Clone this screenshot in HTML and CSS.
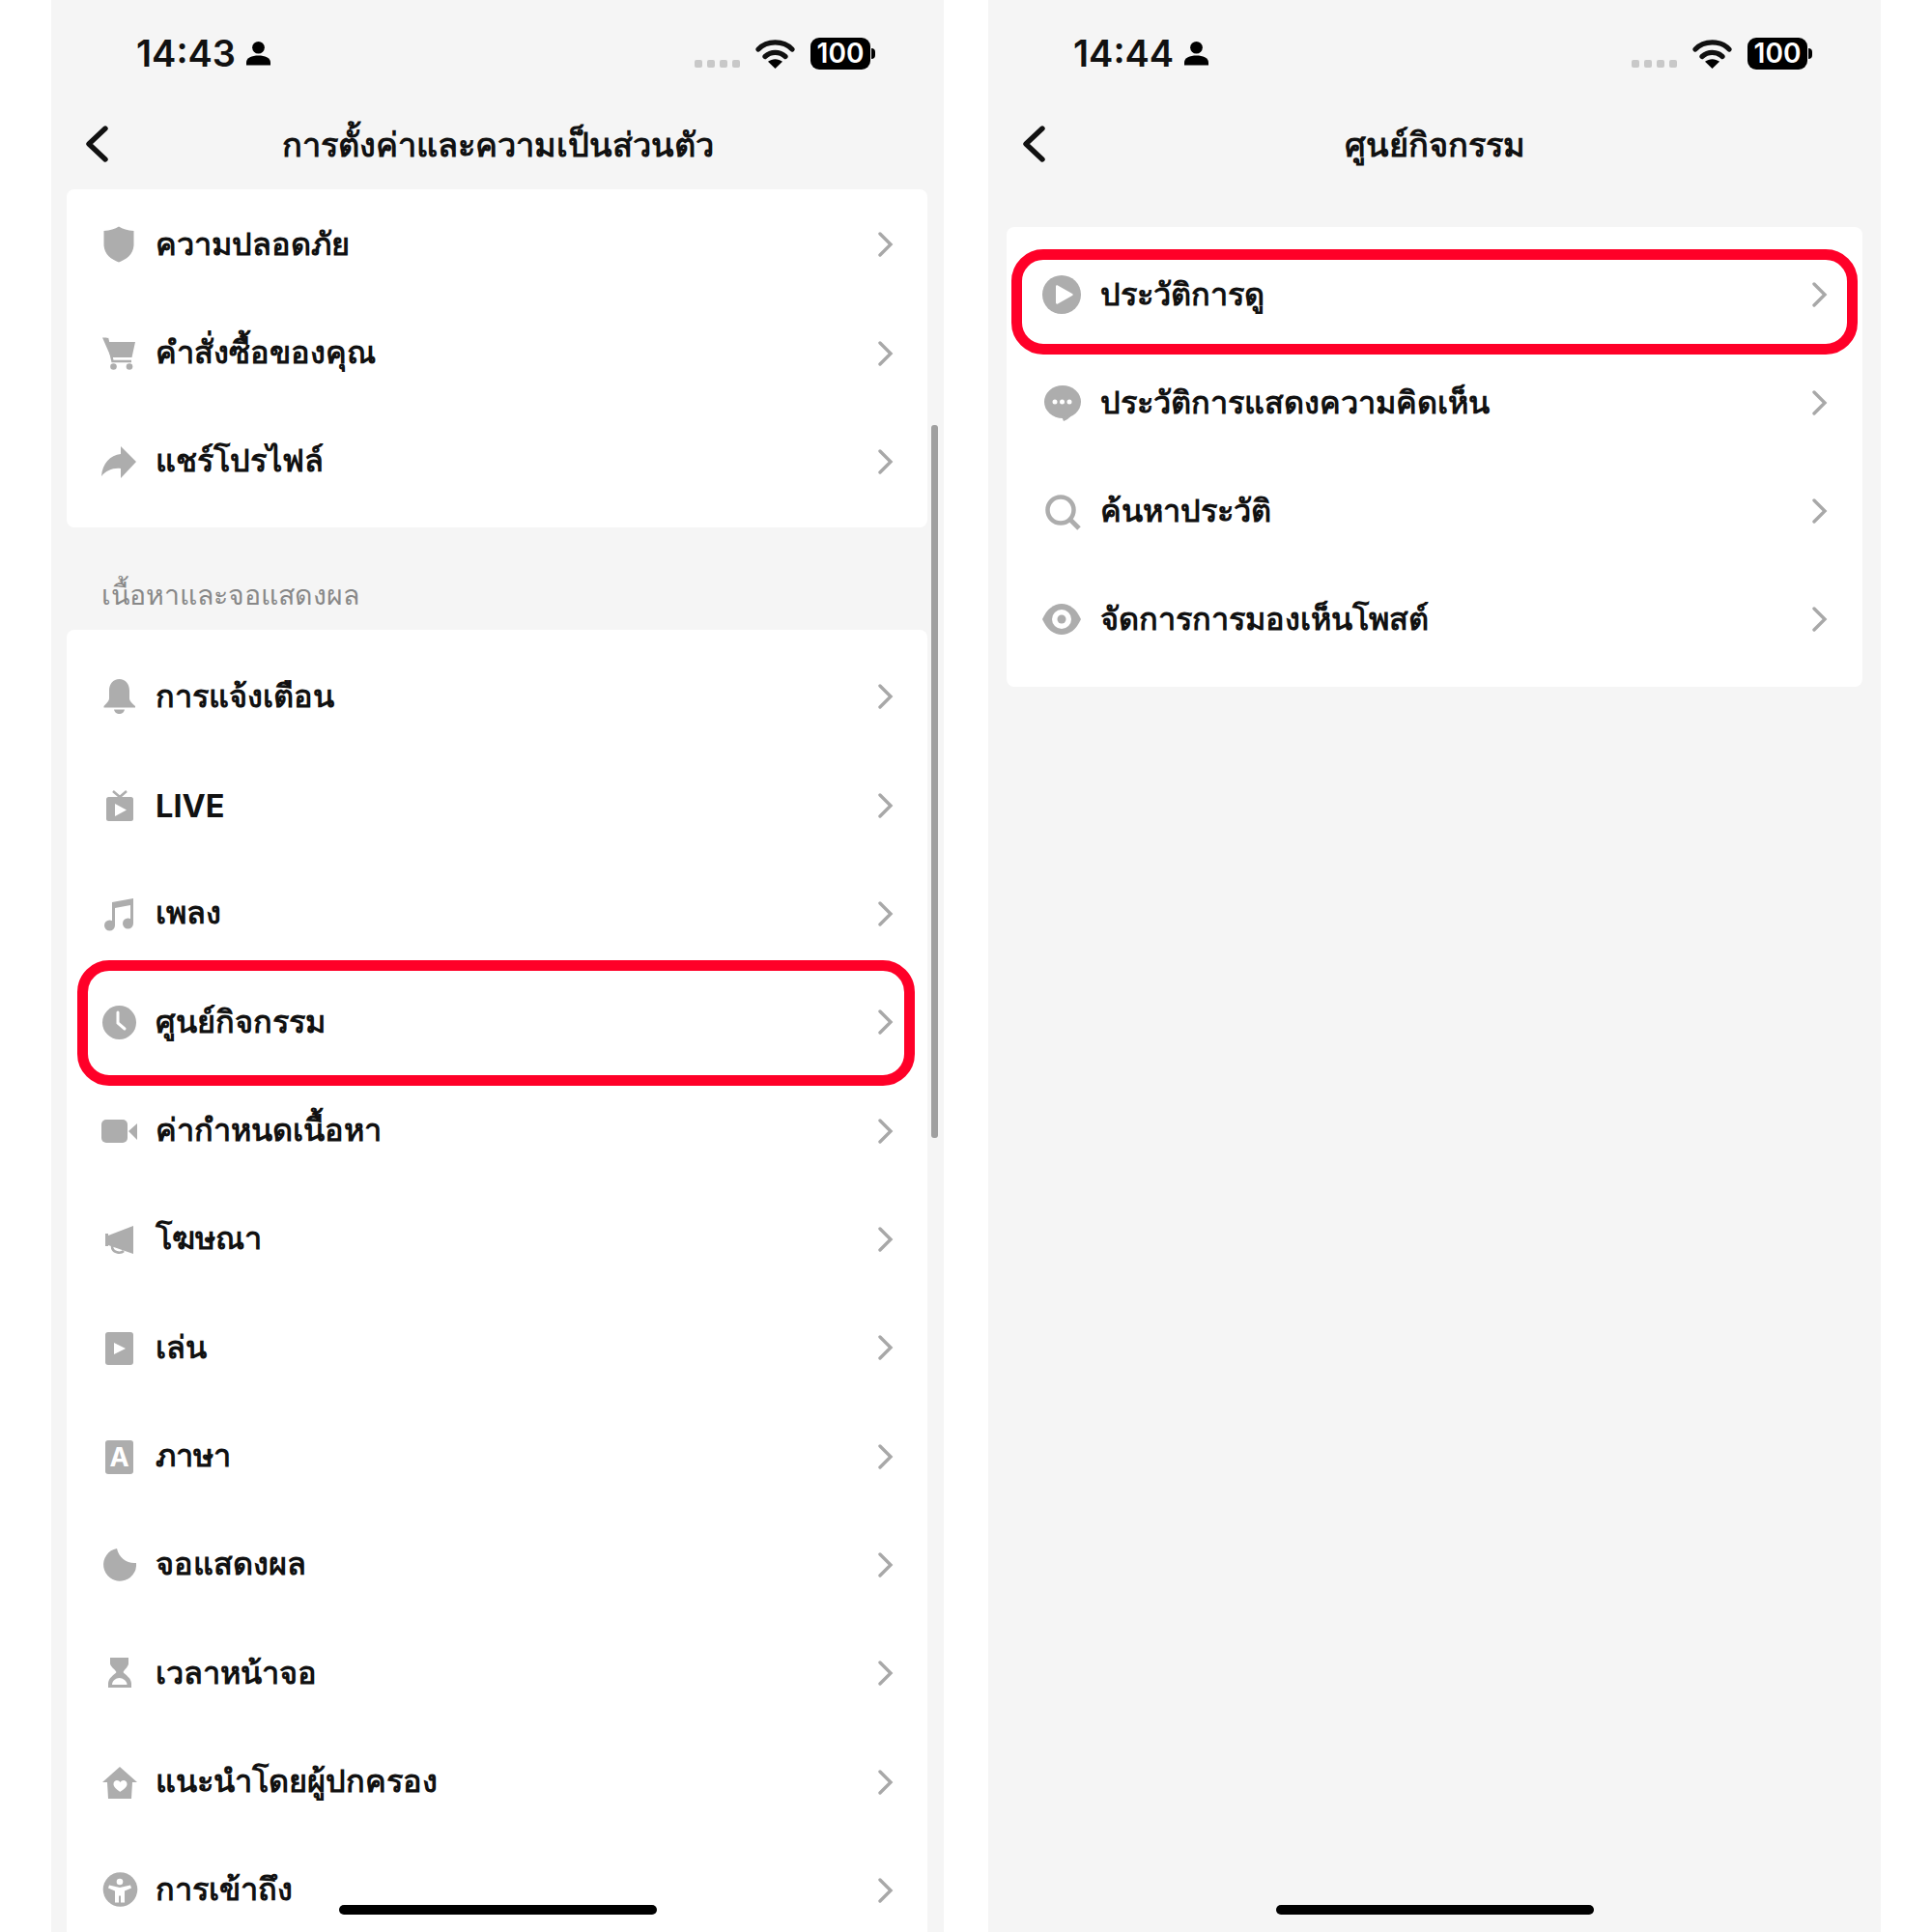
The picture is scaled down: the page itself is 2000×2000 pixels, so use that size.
FILE: index.html
```html
<!DOCTYPE html>
<html lang="th">
<head>
    <meta charset="UTF-8">
    <meta name="viewport" content="width=device-width, initial-scale=1.0">
    <title>ศูนย์กิจกรรม</title>
    <link rel="stylesheet" href="styles.css">
</head>
<body>
    <svg class="sprite" aria-hidden="true">
        <symbol id="chevron" viewBox="0 0 16 26"><path d="M2 2l11 11L2 24" fill="none" stroke="currentColor" stroke-width="3.4" stroke-linecap="round"/></symbol>
        <symbol id="back" viewBox="0 0 24 38"><path d="M21 3L4 19l17 16" fill="none" stroke="currentColor" stroke-width="5.4" stroke-linecap="round" stroke-linejoin="round"/></symbol>
        <symbol id="person" viewBox="0 0 26 26"><circle cx="13" cy="7" r="6.6"/><path d="M0 26v-3c0-5 6-7.5 13-7.5S26 18 26 23v3z"/></symbol>
        <symbol id="wifi" viewBox="0 0 41 31"><path d="M3 11C12 1.500 29 1.500 38 11M10 18.500c6-5.500 15-5.500 21 0" fill="none" stroke="currentColor" stroke-width="5.2" stroke-linecap="round"/><path d="M20.500 31L13 23.800c4.500-3.500 10.500-3.500 15 0z"/></symbol>
    </svg>

    <div class="screens">
        <div class="phone">
            <div class="statusbar">
                <span class="clock">14:43</span>
                <svg class="person"><use href="#person"/></svg>
                <div class="status-right">
                    <div class="signal"><i></i><i></i><i></i><i></i></div>
                    <svg class="wifi"><use href="#wifi"/></svg>
                    <div class="battery">100</div>
                </div>
            </div>
            <div class="navbar">
                <svg class="back"><use href="#back"/></svg>
                <h2>การตั้งค่าและความเป็นส่วนตัว</h2>
            </div>

            <div class="card first-card">
                <div class="row">
                    <svg class="icon" viewBox="0 0 40 40"><path d="M20 1.500C24 4 29 5.500 35.500 6v14c0 10-7.500 15.500-15.500 18.500C12 35.500 4.500 30 4.500 20V6C11 5.500 16 4 20 1.500z"/></svg>
                    <span class="label">ความปลอดภัย</span>
                    <svg class="chevron"><use href="#chevron"/></svg>
                </div>
                <div class="row">
                    <svg class="icon" viewBox="0 0 40 40"><path d="M3 3.500h4.500l2.500 4.500h27l-3.500 16H12z"/><path d="M8 4l5.500 24H33" fill="none" stroke="#adadad" stroke-width="2.5"/><circle cx="14.500" cy="33.500" r="3.3"/><circle cx="31" cy="33.500" r="3.3"/></svg>
                    <span class="label">คำสั่งซื้อของคุณ</span>
                    <svg class="chevron"><use href="#chevron"/></svg>
                </div>
                <div class="row">
                    <svg class="icon" viewBox="0 0 40 40"><path d="M22 4l16 16-16 17V27C14 26 7 29 2 35 3 22 11 13 22 12z"/></svg>
                    <span class="label">แชร์โปรไฟล์</span>
                    <svg class="chevron"><use href="#chevron"/></svg>
                </div>
            </div>

            <div class="section-title">เนื้อหาและจอแสดงผล</div>

            <div class="card">
                <div class="row">
                    <svg class="icon" viewBox="0 0 40 40"><path d="M20.500 2C27 2 31 7 31 14v8c0 3 3 5 6 8v1.500H4.500V30c2.500-3 5.500-5 5.500-8v-8C10 7 14 2 20.500 2z"/><path d="M15 33.500h11c-1 3.500-3 4.500-5.500 4.500S16 37 15 33.500z"/></svg>
                    <span class="label">การแจ้งเตือน</span>
                    <svg class="chevron"><use href="#chevron"/></svg>
                </div>
                <div class="row">
                    <svg class="icon" viewBox="0 0 40 40"><path d="M14 5l7 6 7-6" fill="none" stroke="#adadad" stroke-width="2.5"/><rect x="7" y="11" width="28" height="25" rx="2.5"/><path class="cut" d="M16 18l12 6.500L16 31z"/></svg>
                    <span class="label label-latin">LIVE</span>
                    <svg class="chevron"><use href="#chevron"/></svg>
                </div>
                <div class="row">
                    <svg class="icon" viewBox="0 0 40 40"><path d="M13 30V8L35 4v26h-3V11l-16 3v18h-3z"/><circle cx="10.500" cy="32" r="5.5"/><circle cx="29.500" cy="30" r="5.5"/></svg>
                    <span class="label">เพลง</span>
                    <svg class="chevron"><use href="#chevron"/></svg>
                </div>
                <div class="row">
                    <svg class="icon" viewBox="0 0 40 40"><circle cx="20.500" cy="20.500" r="17.500"/><path d="M19 10v11l7 6" fill="none" stroke="#fff" stroke-width="3" stroke-linecap="round"/></svg>
                    <span class="label">ศูนย์กิจกรรม</span>
                    <svg class="chevron"><use href="#chevron"/></svg>
                </div>
                <div class="row">
                    <svg class="icon" viewBox="0 0 40 40"><rect x="2" y="8" width="27" height="24" rx="5"/><path d="M30 20l9-8v17z"/></svg>
                    <span class="label">ค่ากำหนดเนื้อหา</span>
                    <svg class="chevron"><use href="#chevron"/></svg>
                </div>
                <div class="row">
                    <svg class="icon" viewBox="0 0 40 40"><path d="M6 14h3v13H6z"/><path d="M9 16L35 6v29L9 26z"/><path d="M13 27c0 7 9 8 12 5" fill="none" stroke="#adadad" stroke-width="2.6"/></svg>
                    <span class="label">โฆษณา</span>
                    <svg class="chevron"><use href="#chevron"/></svg>
                </div>
                <div class="row">
                    <svg class="icon" viewBox="0 0 40 40"><rect x="6" y="4" width="29" height="34" rx="3"/><path class="cut" d="M15 15l12 6-12 6z"/></svg>
                    <span class="label">เล่น</span>
                    <svg class="chevron"><use href="#chevron"/></svg>
                </div>
                <div class="row">
                    <svg class="icon" viewBox="0 0 40 40"><rect x="6" y="3" width="29" height="35" rx="3"/><text class="icon-letter" x="20.500" y="30">A</text></svg>
                    <span class="label">ภาษา</span>
                    <svg class="chevron"><use href="#chevron"/></svg>
                </div>
                <div class="row">
                    <svg class="icon" viewBox="0 0 40 40"><path d="M18 3A17 17 0 1 0 38 18C29 19 20 13 18 3z"/></svg>
                    <span class="label">จอแสดงผล</span>
                    <svg class="chevron"><use href="#chevron"/></svg>
                </div>
                <div class="row">
                    <svg class="icon" viewBox="0 0 40 40"><path d="M11 4h19v6c0 3-3 5-5.500 9 2.500 3 8.500 6 8.500 12v4H9v-4c0-6 6-9 8.500-12C15 15 11 13 11 10z"/><path class="cut" d="M13 32c0-4 4-7 7.500-7s8 3 8 7z"/></svg>
                    <span class="label">เวลาหน้าจอ</span>
                    <svg class="chevron"><use href="#chevron"/></svg>
                </div>
                <div class="row">
                    <svg class="icon" viewBox="0 0 40 40"><path d="M21 4l18 16h-5l-1 17H9L8 20H3z"/><path class="cut" d="M21.500 30c-4-3-7-5-7-8 0-3 2-4 3.500-4 1.500 0 2.800.8 3.500 2 .7-1.200 2-2 3.500-2 1.500 0 3.500 1 3.500 4 0 3-3 5-7.500 8z"/></svg>
                    <span class="label">แนะนำโดยผู้ปกครอง</span>
                    <svg class="chevron"><use href="#chevron"/></svg>
                </div>
                <div class="row">
                    <svg class="icon" viewBox="0 0 40 40"><circle cx="21.500" cy="19" r="17.800"/><circle class="cut" cx="21" cy="11" r="3.3"/><path class="cut" d="M10 14.500L21 17l11-2.500 1 3-7 3v12h-4v-7h-2v7h-4v-12l-7-3z"/></svg>
                    <span class="label">การเข้าถึง</span>
                    <svg class="chevron"><use href="#chevron"/></svg>
                </div>
            </div>

            <div class="scrollbar"></div>
            <div class="mark mark-left"></div>
            <div class="home-bar"></div>
        </div>

        <div class="phone">
            <div class="statusbar">
                <span class="clock">14:44</span>
                <svg class="person"><use href="#person"/></svg>
                <div class="status-right">
                    <div class="signal"><i></i><i></i><i></i><i></i></div>
                    <svg class="wifi"><use href="#wifi"/></svg>
                    <div class="battery">100</div>
                </div>
            </div>
            <div class="navbar">
                <svg class="back"><use href="#back"/></svg>
                <h2>ศูนย์กิจกรรม</h2>
            </div>

            <div class="card activity-card">
                <div class="row">
                    <svg class="icon" viewBox="0 0 40 40"><circle cx="20" cy="20" r="20"/><path class="cut" d="M14 11.500c0-1 1-1.500 2-1l15 8.500c1 .5 1 1.500 0 2l-15 8.500c-1 .5-2 0-2-1z"/></svg>
                    <span class="label">ประวัติการดู</span>
                    <svg class="chevron"><use href="#chevron"/></svg>
                </div>
                <div class="row">
                    <svg class="icon" viewBox="0 0 40 40"><ellipse cx="21" cy="19" rx="19" ry="17"/><path d="M20 34l2 5c3-1 6-3 8-6z"/><circle class="cut" cx="13" cy="19" r="2.5"/><circle class="cut" cx="20.500" cy="19" r="2.5"/><circle class="cut" cx="28" cy="19" r="2.5"/></svg>
                    <span class="label">ประวัติการแสดงความคิดเห็น</span>
                    <svg class="chevron"><use href="#chevron"/></svg>
                </div>
                <div class="row">
                    <svg class="icon" viewBox="0 0 40 40"><circle cx="19" cy="19" r="13.500" fill="none" stroke="#adadad" stroke-width="4.5"/><path d="M29 29l9 9" stroke="#adadad" stroke-width="5" fill="none"/></svg>
                    <span class="label">ค้นหาประวัติ</span>
                    <svg class="chevron"><use href="#chevron"/></svg>
                </div>
                <div class="row">
                    <svg class="icon" viewBox="0 0 40 40"><path d="M0 20C5 9 12 4 20 4s15 5 20 16c-5 11-12 16-20 16S5 31 0 20z"/><circle class="cut" cx="20" cy="20" r="10"/><circle cx="20" cy="20" r="4.5"/></svg>
                    <span class="label">จัดการการมองเห็นโพสต์</span>
                    <svg class="chevron"><use href="#chevron"/></svg>
                </div>
            </div>

            <div class="mark mark-right"></div>
            <div class="home-bar"></div>
        </div>
    </div>
</body>
</html>
```

FILE: styles.css
```css
body {
    margin: 0;
    background: white;
    font-family: Inter, "Noto Sans", "Liberation Sans", sans-serif;
    color: #111;
}
.sprite {
    display: none;
}
.screens {
    display: flex;
    gap: 46px;
    padding-left: 53px;
    height: 2000px;
    overflow: hidden;
}
.phone {
    position: relative;
    width: 924px;
    height: 2000px;
    overflow: hidden;
    background-color: #f5f5f5;
}
.statusbar {
    display: flex;
    align-items: center;
    height: 38px;
    padding: 36px 76px 0 88px;
}
.clock {
    font-size: 38px;
    font-weight: 600;
}
.person {
    width: 25px;
    height: 26px;
    margin-left: 11px;
}
.status-right {
    display: flex;
    align-items: center;
    gap: 16px;
    margin-left: auto;
}
.signal {
    display: flex;
    gap: 5px;
    margin-top: 22px;
}
.signal i {
    width: 8px;
    height: 8px;
    border-radius: 2px;
    background-color: #c8c8c8;
}
.wifi {
    width: 41px;
    height: 31px;
}
.battery {
    position: relative;
    width: 62px;
    height: 33px;
    border-radius: 9px;
    background: black;
    color: white;
    font-size: 28px;
    font-weight: 600;
    line-height: 33px;
    text-align: center;
}
.battery::after {
    content: "";
    position: absolute;
    left: 63px;
    top: 11px;
    width: 4px;
    height: 11px;
    border-radius: 0 5px 5px 0;
    background: black;
}
.navbar {
    position: relative;
    display: flex;
    justify-content: center;
    align-items: center;
    box-sizing: border-box;
    height: 122px;
    padding-top: 28px;
}
.navbar h2 {
    margin: 0;
    font-size: 34.4px;
    font-weight: 700;
}
.back {
    position: absolute;
    left: 35px;
    top: 56px;
    width: 24px;
    height: 38px;
}
.card {
    margin: 0 17px 0 16px;
    padding-top: 13px;
    background: white;
    border-radius: 8px;
}
.first-card {
    height: 350px;
    box-sizing: border-box;
    padding-top: 1px;
}
.activity-card {
    margin: 39px 19px 0 19px;
    padding: 14px 0;
}
.activity-card .row {
    height: 112px;
    padding: 0 36px 0 37px;
    gap: 20px;
}
.row {
    display: flex;
    align-items: center;
    gap: 18px;
    height: 112.35px;
    padding: 0 35px 0 34px;
}
.icon {
    flex: none;
    width: 40px;
    height: 40px;
    fill: #adadad;
}
.icon .cut {
    fill: white;
}
.icon-letter {
    fill: white;
    font-size: 27px;
    font-weight: 700;
    text-anchor: middle;
}
.label {
    margin-top: -2px;
    font-size: 32.5px;
    font-weight: 700;
}
.label-latin {
    margin-top: 2px;
}
.chevron {
    flex: none;
    width: 16px;
    height: 26px;
    margin-left: auto;
    color: #a8a8a8;
}
.section-title {
    height: 106px;
    box-sizing: border-box;
    padding: 47px 0 0 52px;
    font-size: 28.5px;
    font-weight: 500;
    color: #888;
}
.scrollbar {
    position: absolute;
    left: 911px;
    top: 440px;
    width: 7px;
    height: 738px;
    border-radius: 3px;
    background-color: #a0a0a0;
}
.mark {
    position: absolute;
    box-sizing: border-box;
    border: 11px solid #ff0028;
    border-radius: 33px;
}
.mark-left {
    left: 27px;
    top: 994px;
    width: 867px;
    height: 130px;
}
.mark-right {
    left: 24px;
    top: 258px;
    width: 876px;
    height: 109px;
}
.home-bar {
    position: absolute;
    left: 298px;
    top: 1972px;
    width: 329px;
    height: 10px;
    border-radius: 5px;
    background: black;
}
```
